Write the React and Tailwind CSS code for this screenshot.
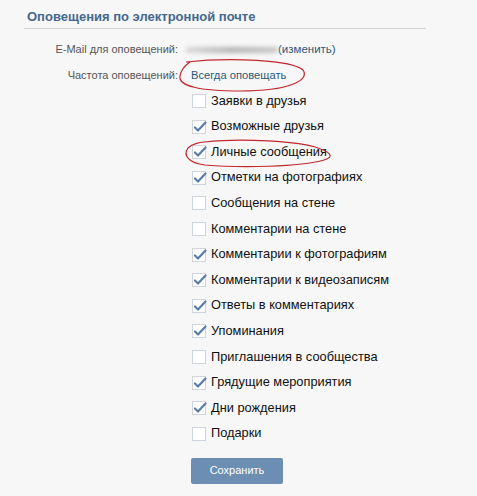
import React from "react";

const items = [
  ["Заявки в друзья", false],
  ["Возможные друзья", true],
  ["Личные сообщения", true],
  ["Отметки на фотографиях", true],
  ["Сообщения на стене", false],
  ["Комментарии на стене", false],
  ["Комментарии к фотографиям", true],
  ["Комментарии к видеозаписям", true],
  ["Ответы в комментариях", true],
  ["Упоминания", true],
  ["Приглашения в сообщества", false],
  ["Грядущие мероприятия", true],
  ["Дни рождения", true],
  ["Подарки", false],
];

function Box({ checked }) {
  return (
    <div className="relative w-[14px] h-[14px] border border-[#cfd5dd] bg-white shrink-0">
      {checked && (
        <svg className="absolute left-[0px] top-[-1px]" width="15" height="14" viewBox="0 0 15 14">
          <path d="M2 7.5 L5 10.5 L12.5 2.5" fill="none" stroke="#5a7da5" strokeWidth="2.2" strokeLinecap="round" strokeLinejoin="round" />
        </svg>
      )}
    </div>
  );
}

export default function App() {
  return (
    <div className="relative w-[477px] h-[496px] bg-[#f7f7f7] font-['Liberation_Sans',Arial,sans-serif] text-[11px] leading-none">
      <div className="pl-[24px] pr-[51px] pt-[9px]">
        <div className="border-b border-[#d3d3d3] pb-[4px] pl-[3px] text-[13px] font-bold text-[#45688e] leading-[15px]">
          Оповещения по электронной почте
        </div>
      </div>
      <div className="pt-[8px]">
        <div className="flex items-center h-[25.6px]">
          <div className="w-[178px] text-right text-[#555]">E-Mail для оповещений:</div>
          <div className="ml-[8px] w-[92px] h-[6px] rounded-full bg-gradient-to-r from-[#d8d8d8] via-[#b4b4b4] to-[#c8c8c8] blur-[2px]" />
          <div className="text-[#2b587a] text-[11.5px]">(изменить)</div>
        </div>
        <div className="flex items-center h-[25.6px]">
          <div className="w-[178px] text-right text-[#555]">Частота оповещений:</div>
          <div className="ml-[13px] text-[#2b587a] text-[11.2px]">Всегда оповещать</div>
        </div>
        {items.map(([label, checked]) => (
          <div key={label} className="flex items-center h-[25.6px] pl-[192px] gap-[5px]">
            <Box checked={checked} />
            <span className="text-[#111] text-[12.8px]">{label}</span>
          </div>
        ))}
        <div className="pl-[191px] mt-[11px]">
          <button className="w-[92px] h-[26px] rounded-[2px] bg-[#6c8eb2] text-white text-[11px] font-['Liberation_Sans',Arial,sans-serif]">
            Сохранить
          </button>
        </div>
      </div>
      <svg className="absolute inset-0 pointer-events-none" width="477" height="496" viewBox="0 0 477 496">
        <path
          d="M186 62 C 230 57, 292 60, 303 70 C 310 80, 290 91, 240 91 C 200 91, 178 86, 180 76 C 181 70, 184 66, 190 62"
          fill="none" stroke="#c0282d" strokeWidth="1.2"
        />
        <path
          d="M205 142 C 240 138, 300 141, 318 148 C 330 152, 335 157, 324 160 C 300 167, 240 168, 205 165 C 188 163, 183 155, 188 148 C 192 144, 198 142, 215 141"
          fill="none" stroke="#c0282d" strokeWidth="1.2"
        />
      </svg>
    </div>
  );
}
